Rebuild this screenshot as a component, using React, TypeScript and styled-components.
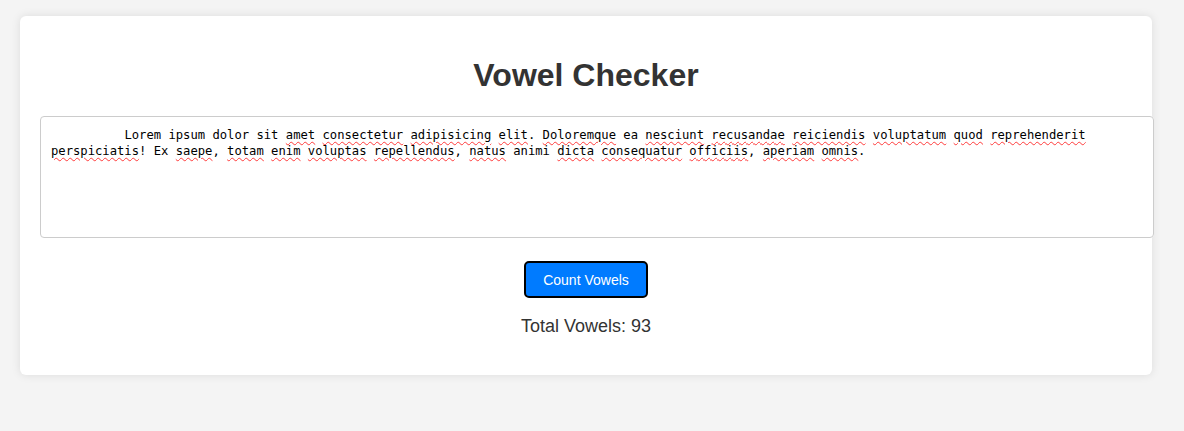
import { ChangeEvent, useState } from 'react';
import styled, { createGlobalStyle } from 'styled-components';

const GlobalStyle = createGlobalStyle`
  html, body {
    margin: 0;
    padding: 0;
    background-color: #f4f4f4;
    font-family: "Liberation Sans", Arial, sans-serif;
  }
`;

const Page = styled.div`
  padding: 16px 32px 0 20px;
  min-height: 431px;
  box-sizing: border-box;
`;

const Card = styled.div`
  width: 1132px;
  box-sizing: border-box;
  padding: 20px;
  background-color: #ffffff;
  border-radius: 6px;
  box-shadow: 0 0 10px rgba(0, 0, 0, 0.1);
  display: flex;
  flex-direction: column;
  align-items: center;
`;

const Title = styled.h1`
  margin: 21px 0 22px;
  font-size: 32px;
  line-height: 37px;
  font-weight: bold;
  color: #333333;
  text-align: center;
`;

const EditorWrap = styled.div`
  position: relative;
  align-self: flex-start;
  width: 1114px;
  height: 122px;
  background: #ffffff;
  border-radius: 4px;
`;

const monoText = `
  font-family: "DejaVu Sans Mono", "Liberation Mono", monospace;
  font-size: 12.2px;
  line-height: 16px;
  white-space: pre-wrap;
  word-wrap: break-word;
`;

// spellcheck marks drawn under the transparent textarea
const Backdrop = styled.div`
  position: absolute;
  inset: 0;
  box-sizing: border-box;
  padding: 11px;
  ${monoText}
  color: transparent;
  pointer-events: none;
  overflow: hidden;
`;

const Misspelled = styled.span`
  text-decoration: underline wavy #ff3b3b;
  text-decoration-thickness: 1px;
  text-underline-offset: 2px;
`;

const TextBox = styled.textarea`
  position: relative;
  display: block;
  box-sizing: border-box;
  width: 100%;
  height: 100%;
  padding: 10px;
  margin: 0;
  border: 1px solid #cccccc;
  border-radius: 4px;
  ${monoText}
  color: #000000;
  background: transparent;
  resize: none;

  &:focus {
    outline: none;
  }
`;

const CountButton = styled.button`
  margin-top: 23px;
  padding: 0;
  width: 124px;
  height: 37px;
  background-color: #007bff;
  color: #ffffff;
  border: 2px solid #000000;
  border-radius: 5px;
  font-family: "Liberation Sans", Arial, sans-serif;
  font-size: 14px;
  white-space: nowrap;
  cursor: pointer;

  &:hover {
    background-color: #0069d9;
  }
`;

const Result = styled.p`
  margin: 18px 0;
  font-size: 18px;
  line-height: 21px;
  color: #333333;
`;

const initialText =
  '          Lorem ipsum dolor sit amet consectetur adipisicing elit. Doloremque ea nesciunt recusandae reiciendis voluptatum quod reprehenderit perspiciatis! Ex saepe, totam enim voluptas repellendus, natus animi dicta consequatur officiis, aperiam omnis.';

const knownWords = new Set(['lorem', 'ipsum', 'dolor', 'sit', 'ea', 'ex', 'animi']);

const countVowels = (s: string) => (s.match(/[aeiou]/gi) || []).length;

const renderMarks = (s: string) =>
  s.split(/(\p{L}+)/u).map((part, i) =>
    /^\p{L}+$/u.test(part) && !knownWords.has(part.toLowerCase()) ? (
      <Misspelled key={i}>{part}</Misspelled>
    ) : (
      part
    )
  );

export default function App() {
  const [text, setText] = useState(initialText);
  const [total, setTotal] = useState(93);

  const handleChange = (e: ChangeEvent<HTMLTextAreaElement>) => {
    setText(e.target.value);
  };

  return (
    <>
      <GlobalStyle />
      <Page>
        <Card>
          <Title>Vowel Checker</Title>
          <EditorWrap>
            <Backdrop aria-hidden>{renderMarks(text)}</Backdrop>
            <TextBox value={text} onChange={handleChange} spellCheck={false} />
          </EditorWrap>
          <CountButton onClick={() => setTotal(countVowels(text))}>Count Vowels</CountButton>
          <Result>Total Vowels: {total}</Result>
        </Card>
      </Page>
    </>
  );
}
